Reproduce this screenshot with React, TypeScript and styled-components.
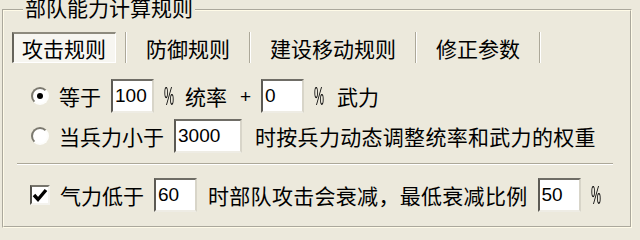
import React from 'react';
import styled, { createGlobalStyle } from 'styled-components';

const GlobalStyle = createGlobalStyle`
  html, body {
    margin: 0;
    padding: 0;
    background: #ece9dc;
  }
  body {
    width: 640px;
    height: 231px;
    overflow: hidden;
    font-family: "Noto Sans CJK SC", "Liberation Sans", sans-serif;
    color: #000;
  }
`;

const GroupBox = styled.fieldset`
  margin: -1px 8px 0 2px;
  padding: 11px 8px 14px 8px;
  border: 2px groove #fffbe8;
  min-width: 0;
`;

const GroupTitle = styled.legend`
  margin-left: 11px;
  padding: 0 2px 6px;
  font-size: 21px;
  line-height: 16px;
  white-space: nowrap;
`;

const TabBar = styled.div`
  display: flex;
  align-items: stretch;
  height: 31px;
`;

const Tab = styled.div<{ $active?: boolean; $first?: boolean }>`
  display: flex;
  align-items: center;
  box-sizing: border-box;
  padding: 0 9px 0 8px;
  margin: ${(p) => (p.$first ? '0 9px 0 0' : '0 9px')};
  font-size: 21px;
  line-height: 1;
  white-space: nowrap;
  border-style: solid;
  border-width: 2px 1px 1px 2px;
  border-color: ${(p) =>
    p.$active ? '#8d8a7e #ffffff #ffffff #66645b' : 'transparent'};
  background: ${(p) => (p.$active ? '#f7f6f1' : 'transparent')};
`;

const TabDivider = styled.div`
  width: 0;
  border-left: 1px solid #aca899;
  border-right: 1px solid #ffffff;
`;

const OptionRow = styled.div<{ $indent: number; $top: number }>`
  display: flex;
  align-items: center;
  gap: 10px;
  height: 34px;
  padding-left: ${(p) => p.$indent}px;
  margin-top: ${(p) => p.$top}px;
`;

const Label = styled.span<{ $spaced?: boolean; $shift?: number }>`
  font-size: 21px;
  line-height: 1;
  white-space: nowrap;
  letter-spacing: ${(p) => (p.$spaced ? '0.3px' : '0')};
  margin-left: ${(p) => p.$shift ?? 0}px;
`;

const Plus = styled.span`
  font-family: "Liberation Sans", sans-serif;
  font-size: 19px;
  line-height: 1;
  margin-left: 3px;
`;

const Percent = styled.span`
  display: inline-block;
  width: 11px;
  font-family: "Liberation Sans", sans-serif;
  font-size: 25px;
  line-height: 1;
  transform: scaleX(0.45);
  transform-origin: left center;
  filter: grayscale(1);
  white-space: nowrap;
`;

const Field = styled.input<{ $w: number }>`
  box-sizing: border-box;
  width: ${(p) => p.$w}px;
  height: 34px;
  margin: 0;
  padding: 0 0 0 2px;
  background: #ffffff;
  border-style: solid;
  border-width: 2px;
  border-color: #6f6d66 #d8d5c9 #eeece4 #5c5a54;
  font-family: "Liberation Sans", sans-serif;
  font-size: 19px;
  color: #000;
  outline: none;
`;

const RadioMark = styled.span<{ $checked?: boolean }>`
  position: relative;
  box-sizing: border-box;
  flex: none;
  width: 18px;
  height: 18px;
  border-radius: 50%;
  border: 2px solid;
  border-color: #7b796f #fdfdfb #fdfdfb #7b796f;
  background: #ffffff;
  &::after {
    content: '';
    display: ${(p) => (p.$checked ? 'block' : 'none')};
    position: absolute;
    left: 5px;
    top: 5px;
    width: 4px;
    height: 4px;
    border-radius: 50%;
    background: #000;
    box-shadow: 0 0 0 1px #000;
  }
`;

const CheckMark = styled.span`
  box-sizing: border-box;
  flex: none;
  display: flex;
  width: 20px;
  height: 20px;
  border: 2px solid;
  border-color: #77756c #f4f3ee #f4f3ee #4f4e48;
  background: #ffffff;
`;

const Rule = styled.div`
  margin: 10px 9px 0 5px;
  border-top: 1px solid #aca899;
  border-bottom: 1px solid #ffffff;
`;

const tabs = ['攻击规则', '防御规则', '建设移动规则', '修正参数'];

export default function App() {
  return (
    <>
      <GlobalStyle />
      <GroupBox>
        <GroupTitle>部队能力计算规则</GroupTitle>
        <TabBar>
          {tabs.map((t, i) => (
            <React.Fragment key={t}>
              <Tab $active={i === 0} $first={i === 0}>
                {t}
              </Tab>
              <TabDivider />
            </React.Fragment>
          ))}
        </TabBar>

        <OptionRow $indent={19} $top={16}>
          <RadioMark $checked />
          <Label>等于</Label>
          <Field $w={43} value="100" readOnly />
          <Percent>%</Percent>
          <Label>统率</Label>
          <Plus>+</Plus>
          <Field $w={43} value="0" readOnly />
          <Percent>%</Percent>
          <Label $shift={2}>武力</Label>
        </OptionRow>

        <OptionRow $indent={19} $top={6}>
          <RadioMark />
          <Label>当兵力小于</Label>
          <Field $w={68} value="3000" readOnly />
          <Label $spaced $shift={3}>
            时按兵力动态调整统率和武力的权重
          </Label>
        </OptionRow>

        <Rule />

        <OptionRow $indent={18} $top={13}>
          <CheckMark>
            <svg width="16" height="16" viewBox="0 0 16 16">
              <polyline
                points="2,8 6,12.5 14,3"
                fill="none"
                stroke="#000"
                strokeWidth="3.4"
                strokeLinejoin="miter"
              />
            </svg>
          </CheckMark>
          <Label>气力低于</Label>
          <Field $w={43} value="60" readOnly />
          <Label $spaced $shift={1}>
            时部队攻击会衰减，最低衰减比例
          </Label>
          <Field $w={43} value="50" readOnly />
          <Percent>%</Percent>
        </OptionRow>
      </GroupBox>
    </>
  );
}
